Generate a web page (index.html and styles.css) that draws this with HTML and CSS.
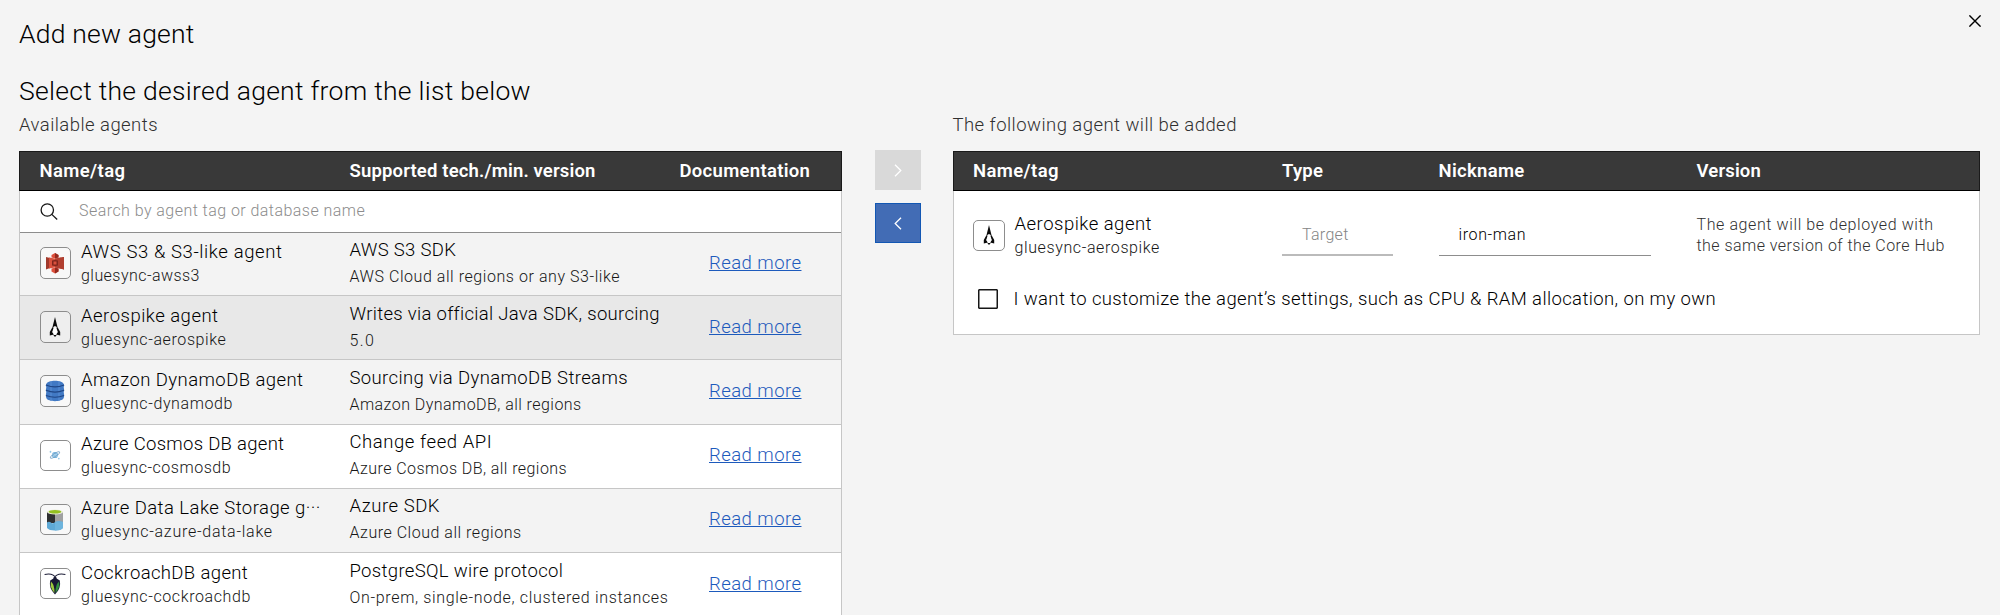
FILE: index.html
```
<!DOCTYPE html>
<html lang="en">
<head>
<meta charset="utf-8">
<title>Add new agent</title>
<link rel="stylesheet" href="styles.css">
</head>
<body>
<svg class="defs" width="0" height="0" aria-hidden="true">
  <symbol id="aerospike" viewBox="0 0 20 20">
    <path d="M10 0 L12.6 10.4 L10 9 L7.4 10.4 Z" fill="#0a0a0a"/>
    <path d="M7.4 10.2 L4.800 15 V18.600 L9 17.600 L7.200 15.200 L8.600 10.600 Z" fill="#0a0a0a"/>
    <path d="M12.600 10.200 L15.200 15 V18.600 L11 17.600 L12.800 15.200 L11.400 10.600 Z" fill="#0a0a0a"/>
    <path d="M10 9.500 L12.400 14.800 L11 17.400 H9 L7.600 14.800 Z" fill="#fff"/>
    <path d="M8.300 18 H11.700 L10 20 Z" fill="#0a0a0a"/>
  </symbol>
</svg>
<main class="dialog">
  <header class="top">
    <h1 class="title">Add new agent</h1>
    <button class="close" aria-label="Close"><svg width="12" height="12" viewBox="0 0 12 12"><path d="M.4 .4 L11.6 11.6 M11.6 .4 L.4 11.6" stroke="#000" stroke-width="1.4"/></svg></button>
  </header>
  <h2 class="heading">Select the desired agent from the list below</h2>
  <div class="columns">
    <section class="available">
      <p class="label">Available agents</p>
      <div class="table">
        <div class="thead left-cols"><span class="ls-39">Name/tag</span><span class="ls-16">Supported tech./min. version</span><span class="ls-35">Documentation</span></div>
        <div class="search">
          <svg class="search-icon" width="18" height="17" viewBox="0 0 18 17" fill="none" stroke="#161616" stroke-width="1.3"><circle cx="7.3" cy="7" r="6.2"/><path d="M11.8 11.4 L17.2 16.5"/></svg>
          <span class="placeholder">Search by agent tag or database name</span>
        </div>
        <div class="rows">
          <div class="row left-cols shade">
            <div class="agent"><span class="logo"><svg width="20" height="22" viewBox="0 0 20 22"><path d="M1 5 L5 6 V16 L1 17.5 Z" fill="#a13a2d"/><path d="M19 5 L15 6 V16 L19 17.5 Z" fill="#8c3123"/><path d="M4 5.5 L10 6.5 L16 5.5 V16.5 L10 15.5 L4 16.5 Z" fill="#d9513d"/><path d="M10 6.5 L19 5 V17.5 L10 15.5 Z" fill="#b13f30"/><path d="M6.5 3 L10 1 L13.5 3 V5.5 L10 6.3 L6.5 5.5 Z M6.5 16.5 L10 15.7 L13.5 16.5 V19.5 L10 21.5 L6.5 19.5 Z" fill="#dc4f3b"/><path d="M10 1 L13.5 3 V5.5 L10 6.3 Z M10 15.7 L13.5 16.5 V19.5 L10 21.5 Z" fill="#93291f"/><path d="M7 8.5 L10 8 L13 8.5 V13.5 L10 14 L7 13.5 Z" fill="#7e251c"/><path d="M8.5 9.5 H11.5 V12.5 H8.5 Z" fill="#d9513d"/></svg></span><div class="names"><span class="name ls-60">AWS S3 &amp; S3-like agent</span><span class="tag ls-45">gluesync-awss3</span></div></div>
            <div class="tech"><span class="name ls-33">AWS S3 SDK</span><span class="tag ls-56">AWS Cloud all regions or any S3-like</span></div>
            <a class="more">Read more</a>
          </div>
          <div class="row left-cols selected">
            <div class="agent"><span class="logo"><svg width="20" height="20"><use href="#aerospike"/></svg></span><div class="names"><span class="name ls-49">Aerospike agent</span><span class="tag">gluesync-aerospike</span></div></div>
            <div class="tech"><span class="name ls-32">Writes via official Java SDK, sourcing</span><span class="tag ls-140">5.0</span></div>
            <a class="more">Read more</a>
          </div>
          <div class="row left-cols shade">
            <div class="agent"><span class="logo"><svg width="20" height="22" viewBox="0 0 20 22"><path d="M1.300 4 C3 -.2 17 -.2 18.700 4 L19.200 5.500 L18.700 7 L19.200 10.500 L18.700 12 L19.200 15.500 L18.700 18 C17 22.200 3 22.200 1.300 18 L.8 15.500 L1.300 12 L.8 10.500 L1.300 7 L.8 5.500 Z" fill="#4179c4"/><path d="M6 1.300 V20.700 M14 1.300 V20.700" stroke="#5b8fd4" stroke-width="1"/><path d="M1 5 Q10 8.800 19 5 M1 10.300 Q10 14 19 10.300 M1 15.500 Q10 19 19 15.500" fill="none" stroke="#1f4584" stroke-width="1.200"/></svg></span><div class="names"><span class="name ls-43">Amazon DynamoDB agent</span><span class="tag">gluesync-dynamodb</span></div></div>
            <div class="tech"><span class="name ls-37">Sourcing via DynamoDB Streams</span><span class="tag ls-45">Amazon DynamoDB, all regions</span></div>
            <a class="more">Read more</a>
          </div>
          <div class="row left-cols">
            <div class="agent"><span class="logo"><svg width="12" height="10" viewBox="0 0 12 10"><circle cx="6" cy="5" r="3.100" fill="#74b2dc"/><path d="M3 4.200 H8 M4 6 H9" stroke="#d8ecf8" stroke-width=".7"/><ellipse cx="6" cy="5" rx="5.600" ry="1.500" transform="rotate(-32 6 5)" fill="none" stroke="#6b9cc2" stroke-width=".7"/><path d="M1.500 .8 V2.800 M.5 1.800 H2.500 M9.800 7.800 V9.400 M9 8.600 H10.600" stroke="#7fbbe0" stroke-width=".7"/></svg></span><div class="names"><span class="name ls-29">Azure Cosmos DB agent</span><span class="tag ls-52">gluesync-cosmosdb</span></div></div>
            <div class="tech"><span class="name ls-56">Change feed API</span><span class="tag ls-43">Azure Cosmos DB, all regions</span></div>
            <a class="more">Read more</a>
          </div>
          <div class="row left-cols shade">
            <div class="agent"><span class="logo"><svg width="18" height="22" viewBox="0 0 18 22"><path d="M1 3 H9 V14 H1 Z" fill="#2f3032"/><path d="M9 3 H17 V14 H9 Z" fill="#a0a1a2"/><path d="M1 13.500 Q3 12 5.500 14 Q7.500 15 9 13 Q13 11.500 17 13 V19 Q15 21.500 9 21.500 T1 19 Z" fill="#5ea9d6"/><path d="M9 13 V21.500 Q15 21.500 17 19 V13 Q13 11.500 9 13 Z" fill="#6db4dd"/><ellipse cx="9" cy="3" rx="8" ry="2.600" fill="#e9ecd9"/><ellipse cx="9" cy="2.800" rx="6.300" ry="1.800" fill="#93c01f"/></svg></span><div class="names"><span class="name">Azure Data Lake Storage g···</span><span class="tag ls-74">gluesync-azure-data-lake</span></div></div>
            <div class="tech"><span class="name ls-53">Azure SDK</span><span class="tag ls-52">Azure Cloud all regions</span></div>
            <a class="more">Read more</a>
          </div>
          <div class="row left-cols">
            <div class="agent"><span class="logo"><svg width="22" height="22" viewBox="0 0 22 22"><path d="M.6 1.500 Q9 -.5 12.500 5.500 M21.400 1.500 Q13 -.5 9.500 5.500" fill="none" stroke="#1b1c36" stroke-width="1.100"/><path d="M11 4.500 L15.800 7.500 Q17.500 15 11 21.500 Q4.500 15 6.200 7.500 Z" fill="#171833"/><path d="M7 8.500 Q10.700 12 10.500 20 Q5.400 14.500 7 8.500 Z" fill="#9bc93c"/><path d="M15 8.500 Q11.300 12 11.500 20 Q16.600 14.500 15 8.500 Z" fill="#2f8f3e"/></svg></span><div class="names"><span class="name ls-37">CockroachDB agent</span><span class="tag">gluesync-cockroachdb</span></div></div>
            <div class="tech"><span class="name ls-33">PostgreSQL wire protocol</span><span class="tag ls-67">On-prem, single-node, clustered instances</span></div>
            <a class="more">Read more</a>
          </div>
        </div>
      </div>
    </section>
    <nav class="move">
      <button class="arrow disabled" aria-label="Add"><svg width="8" height="13" viewBox="0 0 8 13"><path d="M1 .7 L6.800 6.500 L1 12.300" fill="none" stroke="#fff" stroke-width="1.300"/></svg></button>
      <button class="arrow active" aria-label="Remove"><svg width="8" height="13" viewBox="0 0 8 13"><path d="M7 .7 L1.200 6.500 L7 12.300" fill="none" stroke="#fff" stroke-width="1.300"/></svg></button>
    </nav>
    <section class="chosen">
      <p class="label">The following agent will be added</p>
      <div class="table">
        <div class="thead right-cols"><span class="ls-39">Name/tag</span><span>Type</span><span class="ls-35">Nickname</span><span class="ls-16">Version</span></div>
        <div class="body">
          <div class="right-cols entry">
            <div class="agent"><span class="logo"><svg width="20" height="20"><use href="#aerospike"/></svg></span><div class="names"><span class="name ls-49">Aerospike agent</span><span class="tag">gluesync-aerospike</span></div></div>
            <div class="field target">Target</div>
            <div class="field nick">iron-man</div>
            <div class="version"><span class="ls-60">The agent will be deployed with</span><br><span class="ls-45">the same version of the Core Hub</span></div>
          </div>
          <label class="custom"><span class="box"></span><span class="custom-text">I want to customize the agent’s settings, such as CPU &amp; RAM allocation, on my own</span></label>
        </div>
      </div>
    </section>
  </div>
</main>
</body>
</html>
```
FILE: styles.css
```
* { box-sizing: border-box; }
body {
  margin: 0;
  height: 615px;
  overflow: hidden;
  background: #f4f4f4;
  color: #000;
  font: 300 18.5px/24px Roboto, sans-serif;
  letter-spacing: .45px;
  white-space: nowrap;
}
h1, h2, p { margin: 0; font-weight: 300; }
button { border: 0; padding: 0; background: none; display: flex; align-items: center; justify-content: center; }
svg { display: block; }
.defs { position: absolute; }

.dialog { height: 615px; overflow: hidden; padding: 18px 20px 0 19px; }
.top { display: flex; justify-content: space-between; height: 32px; }
.title, .heading { font-size: 26.5px; line-height: 32px; }
.title { letter-spacing: .2px; }
.heading { margin-top: 25px; letter-spacing: .28px; }
.close { width: 12px; height: 12px; margin: -3px -1px 0 0; }

.columns { display: flex; align-items: flex-start; padding-top: 6px; }
.available { width: 823px; }
.move { width: 46px; margin: 37px 32px 0 32.500px; display: grid; gap: 13px; }
.chosen { width: 1027.500px; }
.label { height: 24px; margin-bottom: 14px; color: #303030; }

.table { border: 1px solid #c6c6c6; border-top: 0; }
.thead {
  height: 40px;
  margin: 0 -1px;
  align-items: center;
  background: #393939;
  border: 1px solid #1a1a1a;
  border-bottom-color: #000;
  color: #fff;
  font-weight: 600;
  letter-spacing: .25px;
}
.left-cols { display: grid; grid-template-columns: 310px 330px 1fr; padding-left: 19.500px; }
.right-cols { display: grid; grid-template-columns: 309px 156.500px 258px 1fr; padding-left: 19.500px; }

.search { display: flex; align-items: center; height: 42px; padding: 0 0 1px 20px; background: #fff; border-bottom: 1px solid #8d8d8d; position: relative; z-index: 1; }
.search-icon { margin-right: 21px; }
.placeholder { font-size: 16px; font-weight: 300; letter-spacing: .45px; color: #8c8c8c; }

.rows { margin-top: -1px; height: 384px; overflow: hidden; }
.row { height: 64.200px; background: #fff; border-bottom: 1px solid #c6c6c6; }
.shade { background: #f3f3f3; }
.selected { background: #e8e8e8; }
.agent { display: flex; }
.logo {
  display: flex; align-items: center; justify-content: center;
  width: 31.500px; height: 31.500px; margin: 15px 10px 0 0;
  border: 1px solid #8d8d8d; border-radius: 5px; background: #fff;
}
.shade .logo { background: #f8f8f8; }
.selected .logo { background: #eee; }
.names, .tech { display: flex; flex-direction: column; }
.names { padding-top: 7.600px; gap: 1px; }
.entry .names { padding-top: 7px; }
.tech { padding-top: 5.600px; gap: 4px; }
.tag { font-size: 16px; line-height: 22px; letter-spacing: .61px; color: #161616; }
.more { padding: 18.700px 0 0 29.500px; color: #1d5abc; text-decoration: underline; text-decoration-thickness: 1px; text-underline-offset: 1px; }

.arrow { width: 46px; height: 40px; }
.disabled { background: #d9d9d9; }
.active { background: #426cb5; border: 1px solid #1257b3; }

.body { height: 143px; background: #fff; }
.entry { height: 78px; padding-top: 14px; }
.entry .logo { margin-top: 14.500px; }
.field { height: 42px; margin-top: 9px; padding-left: 20px; line-height: 41px; font-size: 16px; }
.target { width: 111px; color: #858585; letter-spacing: .3px; border-bottom: 2px solid #bbb; }
.nick { width: 212.500px; letter-spacing: .61px; border-bottom: 1px solid #8d8d8d; }
.version { padding-top: 9px; font-size: 16px; line-height: 21px; color: #303030; }
.custom { display: flex; align-items: center; height: 60px; padding-left: 24.500px; }
.box { width: 20px; height: 20px; margin-right: 15.500px; border: 1.800px solid #161616; border-radius: 1px; box-shadow: inset 0 0 0 .5px #161616; }
.custom-text { letter-spacing: .38px; }

.ls-16 { letter-spacing: .16px; }
.ls-29 { letter-spacing: .29px; }
.ls-32 { letter-spacing: .3px; }
.ls-33 { letter-spacing: .33px; }
.ls-35 { letter-spacing: .3px; }
.ls-37 { letter-spacing: .37px; }
.ls-39 { letter-spacing: .39px; }
.ls-43 { letter-spacing: .43px; }
.ls-45 { letter-spacing: .45px; }
.ls-49 { letter-spacing: .49px; }
.ls-52 { letter-spacing: .52px; }
.ls-53 { letter-spacing: .53px; }
.ls-56 { letter-spacing: .56px; }
.ls-60 { letter-spacing: .6px; }
.ls-67 { letter-spacing: .67px; }
.ls-74 { letter-spacing: .74px; }
.ls-140 { letter-spacing: 1.400px; }
```
